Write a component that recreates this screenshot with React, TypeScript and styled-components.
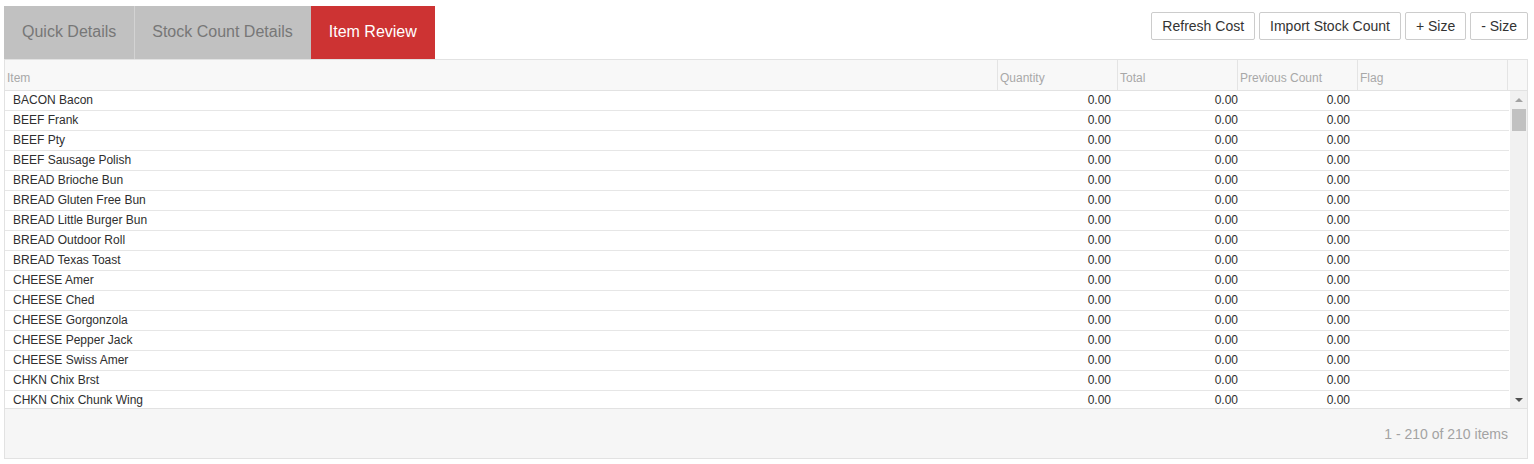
import React from 'react';
import styled, { createGlobalStyle } from 'styled-components';

const GlobalStyle = createGlobalStyle`
    body {
        margin: 0;
        background: #ffffff;
        font-family: Arial, "Liberation Sans", Helvetica, sans-serif;
    }
`;

interface Column {
    key: string;
    title: string;
    width: number;
    align: 'left' | 'right';
    padRight: number;
}

const columns: Column[] = [
    { key: 'item', title: 'Item', width: 993, align: 'left', padRight: 0 },
    { key: 'quantity', title: 'Quantity', width: 120, align: 'right', padRight: 7 },
    { key: 'total', title: 'Total', width: 120, align: 'right', padRight: 0 },
    { key: 'previous', title: 'Previous Count', width: 120, align: 'right', padRight: 8 },
    { key: 'flag', title: 'Flag', width: 150, align: 'left', padRight: 0 },
];

const items = [
    'BACON Bacon',
    'BEEF Frank',
    'BEEF Pty',
    'BEEF Sausage Polish',
    'BREAD Brioche Bun',
    'BREAD Gluten Free Bun',
    'BREAD Little Burger Bun',
    'BREAD Outdoor Roll',
    'BREAD Texas Toast',
    'CHEESE Amer',
    'CHEESE Ched',
    'CHEESE Gorgonzola',
    'CHEESE Pepper Jack',
    'CHEESE Swiss Amer',
    'CHKN Chix Brst',
    'CHKN Chix Chunk Wing',
];

const tabs = ['Quick Details', 'Stock Count Details', 'Item Review'];
const actions = ['Refresh Cost', 'Import Stock Count', '+ Size', '- Size'];

const Page = styled.div`
    width: 1524px;
    padding: 6px 0 0 4px;
`;

const TopBar = styled.div`
    display: flex;
    justify-content: space-between;
    align-items: flex-start;
`;

const Tabs = styled.div`
    display: flex;
`;

const Tab = styled.div<{ active?: boolean; divider?: boolean }>`
    height: 53px;
    line-height: 52px;
    padding: 0 18px;
    font-size: 16px;
    background: ${props => props.active ? '#cd3333' : '#c1c1c1'};
    color: ${props => props.active ? '#ffffff' : '#777777'};
    box-shadow: ${props => props.divider ? 'inset 1px 0 0 #d3d3d3' : 'none'};
    cursor: pointer;
`;

const Actions = styled.div`
    display: flex;
    gap: 4px;
    margin-top: 6px;
`;

const Button = styled.button`
    height: 28px;
    padding: 0 10px;
    border: 1px solid #cccccc;
    border-radius: 2px;
    background: #ffffff;
    color: #333333;
    font-family: Arial, "Liberation Sans", sans-serif;
    font-size: 14px;
    cursor: pointer;
`;

const Grid = styled.div`
    border: 1px solid #e2e2e2;
`;

const HeaderRow = styled.div`
    display: flex;
    height: 30px;
    background: #f8f8f8;
    border-bottom: 1px solid #e2e2e2;
`;

const HeaderCell = styled.div<{ w: number }>`
    width: ${props => props.w}px;
    flex: none;
    box-sizing: border-box;
    border-right: 1px solid #e4e4e4;
    padding: 0 2px 5px;
    display: flex;
    align-items: flex-end;
    font-size: 12px;
    color: #a8a8a8;
`;

const HeaderSpacer = styled.div`
    flex: 1;
`;

const BodyWrap = styled.div`
    display: flex;
    height: 317px;
    overflow: hidden;
`;

const Rows = styled.div`
    width: 1504px;
    flex: none;
`;

const Row = styled.div`
    display: flex;
    height: 19px;
    border-bottom: 1px solid #e6e6e6;
`;

const Cell = styled.div<{ w: number; align: 'left' | 'right'; padRight: number }>`
    width: ${props => props.w}px;
    flex: none;
    box-sizing: border-box;
    padding: 0 ${props => props.padRight}px 0 ${props => props.align === 'left' ? 8 : 0}px;
    text-align: ${props => props.align};
    line-height: 19px;
    font-size: 12px;
    color: #2e2e2e;
    white-space: nowrap;
`;

const Scrollbar = styled.div`
    width: 17px;
    margin-left: 1px;
    background: #f1f1f1;
    display: flex;
    flex-direction: column;
    align-items: center;
`;

const Arrow = styled.div<{ down?: boolean }>`
    height: 17px;
    width: 17px;
    display: flex;
    align-items: center;
    justify-content: center;
    &::after {
        content: '';
        border-left: 4px solid transparent;
        border-right: 4px solid transparent;
        ${props => props.down ? 'border-top: 4px solid #505050;' : 'border-bottom: 4px solid #a3a3a3;'}
    }
`;

const Track = styled.div`
    flex: 1;
    width: 100%;
`;

const Thumb = styled.div`
    width: 14px;
    height: 22px;
    margin: 1px auto 0;
    background: #c1c1c1;
`;

const Footer = styled.div`
    height: 49px;
    border-top: 1px solid #e2e2e2;
    background: #f6f6f6;
    display: flex;
    align-items: center;
    justify-content: flex-end;
    padding-right: 19px;
    font-size: 14px;
    color: #a3a3a3;
`;

const App: React.FC = () => {
    return (
        <Page>
            <GlobalStyle />
            <TopBar>
                <Tabs>
                    {tabs.map((tab, i) => (
                        <Tab key={tab} active={i === 2} divider={i === 1}>{tab}</Tab>
                    ))}
                </Tabs>
                <Actions>
                    {actions.map(a => (
                        <Button key={a}>{a}</Button>
                    ))}
                </Actions>
            </TopBar>
            <Grid>
                <HeaderRow>
                    {columns.map(col => (
                        <HeaderCell key={col.key} w={col.width}>
                            {col.title}
                        </HeaderCell>
                    ))}
                    <HeaderSpacer />
                </HeaderRow>
                <BodyWrap>
                    <Rows>
                        {items.map(item => (
                            <Row key={item}>
                                {columns.map(col => (
                                    <Cell key={col.key} w={col.width} align={col.align} padRight={col.padRight}>
                                        {col.key === 'item' ? item : col.key === 'flag' ? '' : '0.00'}
                                    </Cell>
                                ))}
                            </Row>
                        ))}
                    </Rows>
                    <Scrollbar>
                        <Arrow />
                        <Track>
                            <Thumb />
                        </Track>
                        <Arrow down />
                    </Scrollbar>
                </BodyWrap>
                <Footer>1 - 210 of 210 items</Footer>
            </Grid>
        </Page>
    );
};

export default App;
